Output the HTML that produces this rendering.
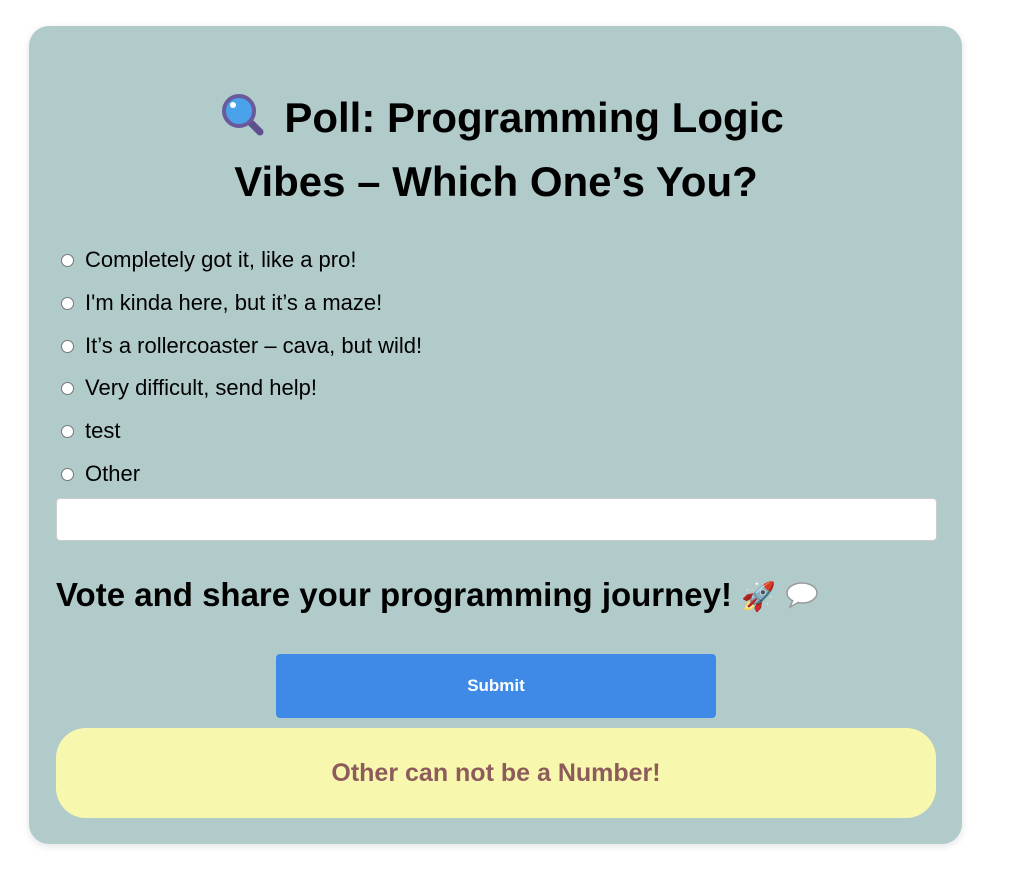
<!DOCTYPE html>
<html><head><meta charset="utf-8"><style>
body{margin:0;background:#fff;width:1012px;height:872px;position:relative;font-family:"Liberation Sans",sans-serif;overflow:hidden}
.card{position:absolute;left:29px;top:26px;width:933px;height:818px;background:#b1cbcb;border-radius:20px;box-shadow:0 2px 8px rgba(0,0,0,.12)}
.t{position:absolute;left:0;width:1012px;text-align:center;font-weight:bold;font-size:42px;color:#000;white-space:nowrap}
.opt{position:absolute;left:61px;font-size:22px;color:#000;display:flex;align-items:center;height:26px}
.opt i{display:inline-block;width:11px;height:11px;border:1px solid #777;border-radius:50%;background:#fff;margin-right:11px}
</style></head><body>
<div class="card"></div>
<div class="t" style="top:92px;left:-4px"><svg width="46" height="46" viewBox="0 0 46 46" style="vertical-align:-6px;margin-right:18px"><line x1="27" y1="27" x2="40" y2="40" stroke="#5f4f8f" stroke-width="7" stroke-linecap="round"/><circle cx="19" cy="19" r="15" fill="#4aa3ea" stroke="#6a5a9c" stroke-width="4"/><circle cx="13" cy="13" r="3" fill="#fff"/></svg>Poll: Programming Logic</div>
<div class="t" style="top:158px;left:-10px">Vibes – Which One’s You?</div>
<div class="opt" style="top:247px"><i></i>Completely got it, like a pro!</div>
<div class="opt" style="top:290px"><i></i>I'm kinda here, but it’s a maze!</div>
<div class="opt" style="top:333px"><i></i>It’s a rollercoaster – cava, but wild!</div>
<div class="opt" style="top:375px"><i></i>Very difficult, send help!</div>
<div class="opt" style="top:418px"><i></i>test</div>
<div class="opt" style="top:461px"><i></i>Other</div>
<div style="position:absolute;left:56px;top:498px;width:879px;height:41px;background:#fff;border:1px solid #ccc;border-radius:4px"></div>
<div style="position:absolute;left:56px;top:576px;font-size:33px;font-weight:bold;white-space:nowrap">Vote and share your programming journey! <span style="font-size:28px">🚀</span> <svg width="34" height="28" viewBox="0 0 34 28" style="vertical-align:-3px"><ellipse cx="17" cy="12" rx="15" ry="10" fill="#fff" stroke="#999" stroke-width="1.5"/><path d="M8 19 L5 26 L14 21" fill="#fff" stroke="#999" stroke-width="1.5"/></svg></div>
<div style="position:absolute;left:276px;top:654px;width:440px;height:64px;background:#3e8ae6;border-radius:4px;color:#fff;font-weight:bold;font-size:17px;display:flex;align-items:center;justify-content:center">Submit</div>
<div style="position:absolute;left:56px;top:728px;width:880px;height:90px;background:#f7f7ae;border-radius:30px;color:#8e5b5b;font-weight:bold;font-size:25px;display:flex;align-items:center;justify-content:center">Other can not be a Number!</div>
</body></html>
